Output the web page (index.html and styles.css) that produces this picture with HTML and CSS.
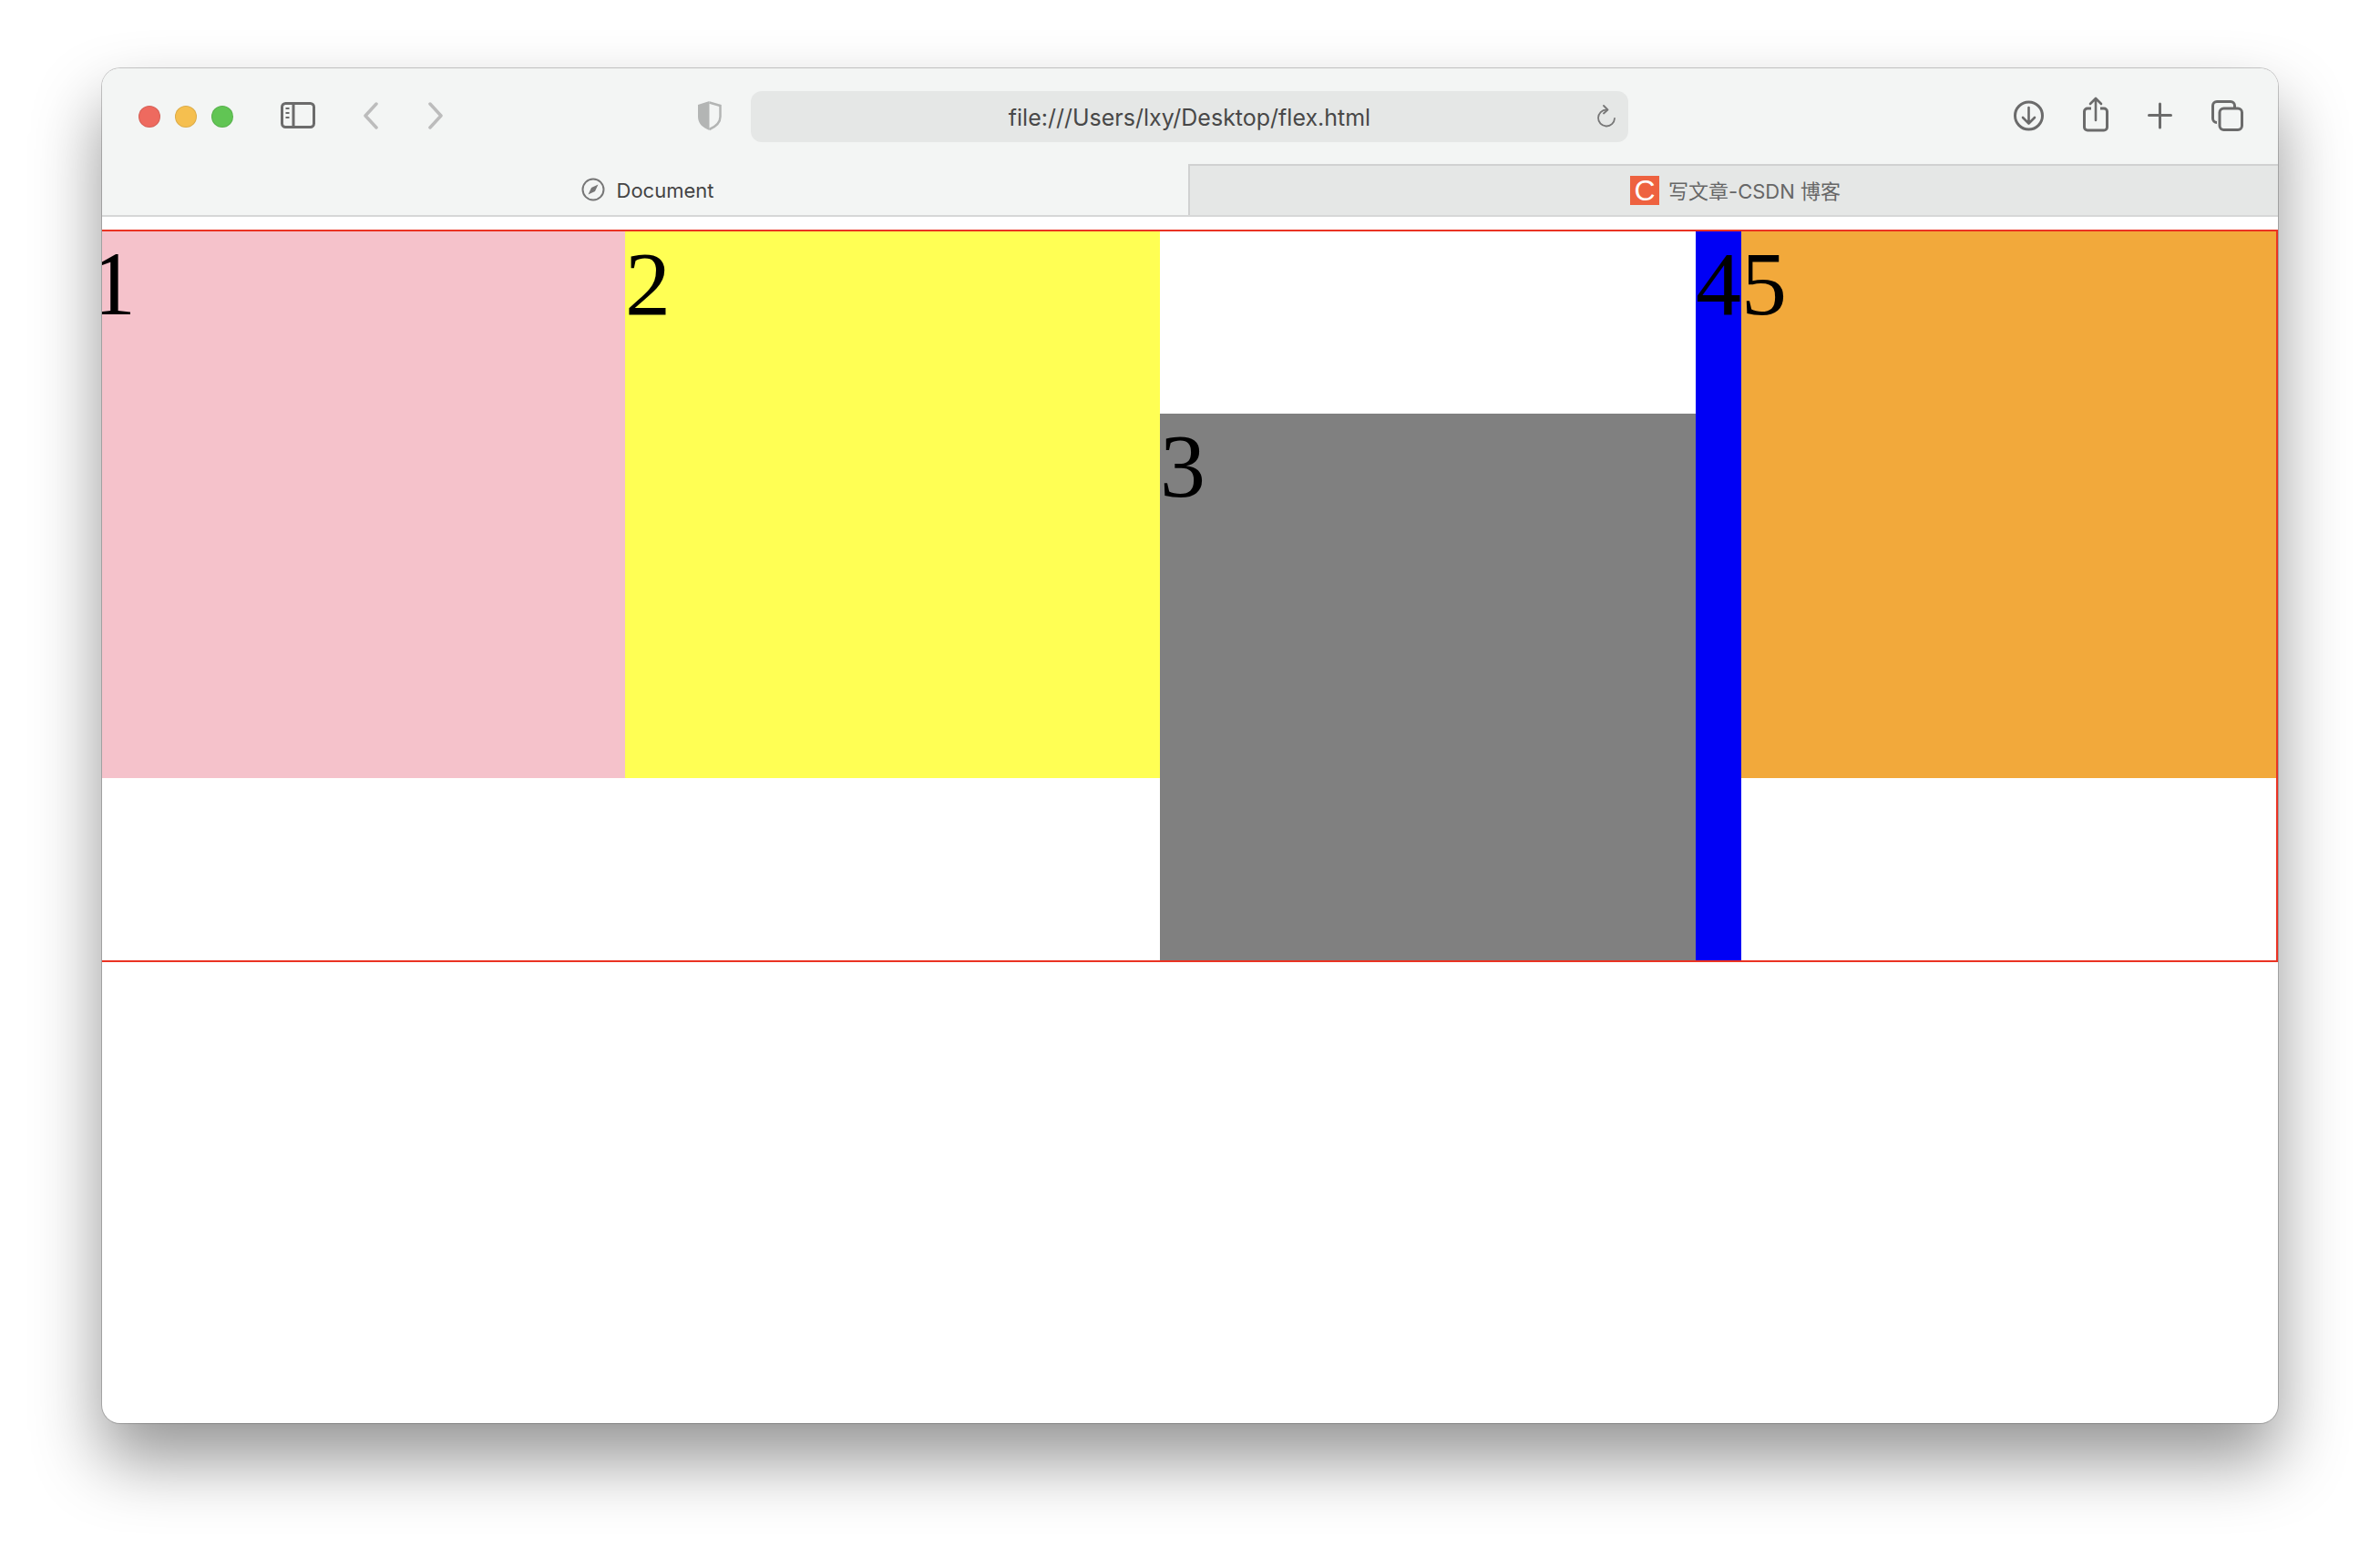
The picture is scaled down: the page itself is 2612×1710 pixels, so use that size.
FILE: index.html
```html
<!DOCTYPE html>
<html lang="en">
<head>
  <meta charset="UTF-8" />
  <title>Document</title>
  <link rel="stylesheet" href="styles.css">
</head>
<body>

  <div class="window">

    <!-- TOOLBAR -->
    <div class="toolbar">
      <div class="lights">
        <span class="light light-red"></span>
        <span class="light light-yellow"></span>
        <span class="light light-green"></span>
      </div>

      <svg class="icon sidebar-icon" width="38" height="44" viewBox="0 0 38 44">
        <rect x="1.5" y="7.5" width="35" height="26" rx="4" fill="none" stroke="#6b6b6b" stroke-width="3"/>
        <path d="M14 7v26" stroke="#6b6b6b" stroke-width="3"/>
        <path d="M5.500 13h4M5.500 18h4M5.500 23h4" stroke="#6b6b6b" stroke-width="2"/>
      </svg>

      <svg class="icon back-icon" width="16" height="44" viewBox="0 0 16 44">
        <path d="M14 8L2 21l12 13" fill="none" stroke="#bcbcbc" stroke-width="3.500" stroke-linecap="round" stroke-linejoin="round"/>
      </svg>

      <svg class="icon forward-icon" width="16" height="44" viewBox="0 0 16 44">
        <path d="M2 8l12 13L2 34" fill="none" stroke="#bcbcbc" stroke-width="3.500" stroke-linecap="round" stroke-linejoin="round"/>
      </svg>

      <svg class="icon shield-icon" width="27" height="44" viewBox="0 0 27 44">
        <path d="M13.500 5L1 9v13c0 8 5.500 12 12.500 15z" fill="#b3b5b4"/>
        <path d="M13.500 6.500L25.500 10v12c0 7-5 11-12 14" fill="none" stroke="#b3b5b4" stroke-width="2.500"/>
      </svg>

      <div class="url-bar">
        <span class="url-text">file:///Users/lxy/Desktop/flex.html</span>
        <svg class="reload-icon" width="21" height="26" viewBox="0 0 21 26">
          <path d="M10 5.500a9 9 0 1 0 9 9.500" fill="none" stroke="#777" stroke-width="1.800" stroke-linecap="round"/>
          <path d="M7 1l4.500 4.500L7 9.500" fill="none" stroke="#777" stroke-width="1.800" stroke-linecap="round" stroke-linejoin="round"/>
        </svg>
      </div>

      <div class="actions">
        <svg class="icon" width="33" height="44" viewBox="0 0 33 44">
          <circle cx="16.500" cy="21" r="15" fill="none" stroke="#6b6b6b" stroke-width="3"/>
          <path d="M16.500 12v17M10 23l6.500 6.500L23 23" fill="none" stroke="#6b6b6b" stroke-width="2.600" stroke-linecap="round" stroke-linejoin="round"/>
        </svg>
        <svg class="icon" width="28" height="44" viewBox="0 0 28 44">
          <path d="M9 13H5a3.500 3.500 0 0 0-3.500 3.500v17A3.500 3.500 0 0 0 5 37h18a3.500 3.500 0 0 0 3.500-3.500v-17A3.500 3.500 0 0 0 23 13h-4" fill="none" stroke="#6b6b6b" stroke-width="3"/>
          <path d="M14 2.500V26M8 8l6-6 6 6" fill="none" stroke="#6b6b6b" stroke-width="2.600" stroke-linecap="round" stroke-linejoin="round"/>
        </svg>
        <svg class="icon" width="27" height="44" viewBox="0 0 27 44">
          <path d="M13.500 8v26M1.500 20.500h24" fill="none" stroke="#6b6b6b" stroke-width="3" stroke-linecap="round"/>
        </svg>
        <svg class="icon" width="35" height="44" viewBox="0 0 35 44">
          <path d="M6 28.500a4.500 4.500 0 0 1-4.500-4.500V10A4.500 4.500 0 0 1 6 5.500h15a4.500 4.500 0 0 1 4.500 4.500v2" fill="none" stroke="#6b6b6b" stroke-width="3"/>
          <rect x="9" y="13" width="24.500" height="23.500" rx="4.500" fill="none" stroke="#6b6b6b" stroke-width="3"/>
        </svg>
      </div>
    </div>

    <!-- TABS -->
    <div class="tabs">
      <div class="tab tab-active">
        <svg class="compass" width="26" height="26" viewBox="0 0 26 26">
          <circle cx="13" cy="13" r="11.500" fill="none" stroke="#777" stroke-width="2"/>
          <path d="M18.500 7.500L15 15l-7.500 3.500L11 11z" fill="#777"/>
        </svg>
        <span class="tab-title">Document</span>
      </div>
      <div class="tab tab-other">
        <span class="favicon">C</span>
        <span class="tab-title">写文章-CSDN 博客</span>
      </div>
    </div>

    <!-- PAGE -->
    <div class="page">
      <div class="flex-box">
        <div class="item item-pink">1</div>
        <div class="item item-yellow">2</div>
        <div class="item item-gray">3</div>
        <div class="item item-blue">4</div>
        <div class="item item-orange">5</div>
      </div>
    </div>

  </div>

</body>
</html>
```

FILE: styles.css
```css
html, body {
  margin: 0;
  height: 1710px;
  overflow: hidden;
  background: #fff;
}

body {
  box-sizing: border-box;
  padding: 75px 112px 0;
  font-family: 'Inter', 'Noto Sans CJK SC', sans-serif;
}

.window {
  width: 2388px;
  height: 1487px;
  border-radius: 20px;
  overflow: hidden;
  background: #fff;
  box-shadow: 0 0 0 1px rgba(0, 0, 0, 0.2), 0 40px 75px rgba(0, 0, 0, 0.42);
}

.toolbar {
  height: 105px;
  box-sizing: border-box;
  padding: 25px 38px 24px 40px;
  display: flex;
  align-items: center;
  background: #f3f5f4;
}

.lights {
  display: flex;
  gap: 16px;
}

.light {
  width: 24px;
  height: 24px;
  box-sizing: border-box;
  border-radius: 50%;
  border: 1px solid rgba(0, 0, 0, 0.1);
}

.light-red { background: #ee6a5f; }
.light-yellow { background: #f5bf4f; }
.light-green { background: #61c554; }

.icon {
  flex: none;
  display: block;
}

.sidebar-icon { margin-left: 52px; }
.back-icon { margin-left: 53px; }
.forward-icon { margin-left: 55px; }
.shield-icon { margin-left: 279px; }

.url-bar {
  flex: none;
  width: 963px;
  height: 56px;
  margin-left: 32px;
  padding-right: 13px;
  box-sizing: border-box;
  border-radius: 12px;
  background: #e5e7e6;
  display: flex;
  align-items: center;
  position: relative;
  justify-content: flex-end;
}

.url-text {
  position: absolute;
  left: 0;
  right: 0;
  padding-top: 2px;
  text-align: center;
  font-size: 25px;
  color: #484848;
}

.actions {
  margin-left: auto;
  display: flex;
  gap: 43px;
}

.tabs {
  height: 58px;
  box-sizing: border-box;
  display: flex;
  border-bottom: 2px solid #d6d7d7;
  background: #f3f5f4;
}

.tab {
  display: flex;
  align-items: center;
  justify-content: center;
  font-size: 22px;
}

.tab-active {
  flex: none;
  width: 1192px;
  box-sizing: border-box;
  padding-left: 5px;
  gap: 13px;
  color: #444;
}

.tab-active .tab-title {
  padding-top: 2px;
}

.tab-other {
  flex: 1;
  padding-left: 3px;
  gap: 10px;
  color: #666;
  background: #e5e7e6;
  border-top: 2px solid #d0d1d1;
  border-left: 2px solid #d0d1d1;
}

.tab-other .tab-title {
  padding-bottom: 2px;
}

.favicon {
  width: 32px;
  height: 32px;
  background: #ee6240;
  color: #fff;
  font: 32px/32px 'Liberation Sans', sans-serif;
  text-align: center;
}

.page {
  padding-top: 14px;
}

.flex-box {
  display: flex;
  height: 804px;
  width: 2403px;
  margin-left: -15px;
  box-sizing: border-box;
  border: 2px solid #ea3323;
  font-family: 'Liberation Serif', serif;
  font-size: 100px;
  color: #000;
}

.item {
  flex: 0 0 587px;
  height: 600px;
}

.item-pink { background: #f5c2cb; }
.item-yellow { background: #ffff54; }
.item-orange { background: #f2a93b; }

.item-gray {
  flex-basis: 588px;
  background: #808080;
  align-self: flex-end;
}

.item-blue {
  flex: none;
  height: auto;
  background: #0000f5;
}
```
